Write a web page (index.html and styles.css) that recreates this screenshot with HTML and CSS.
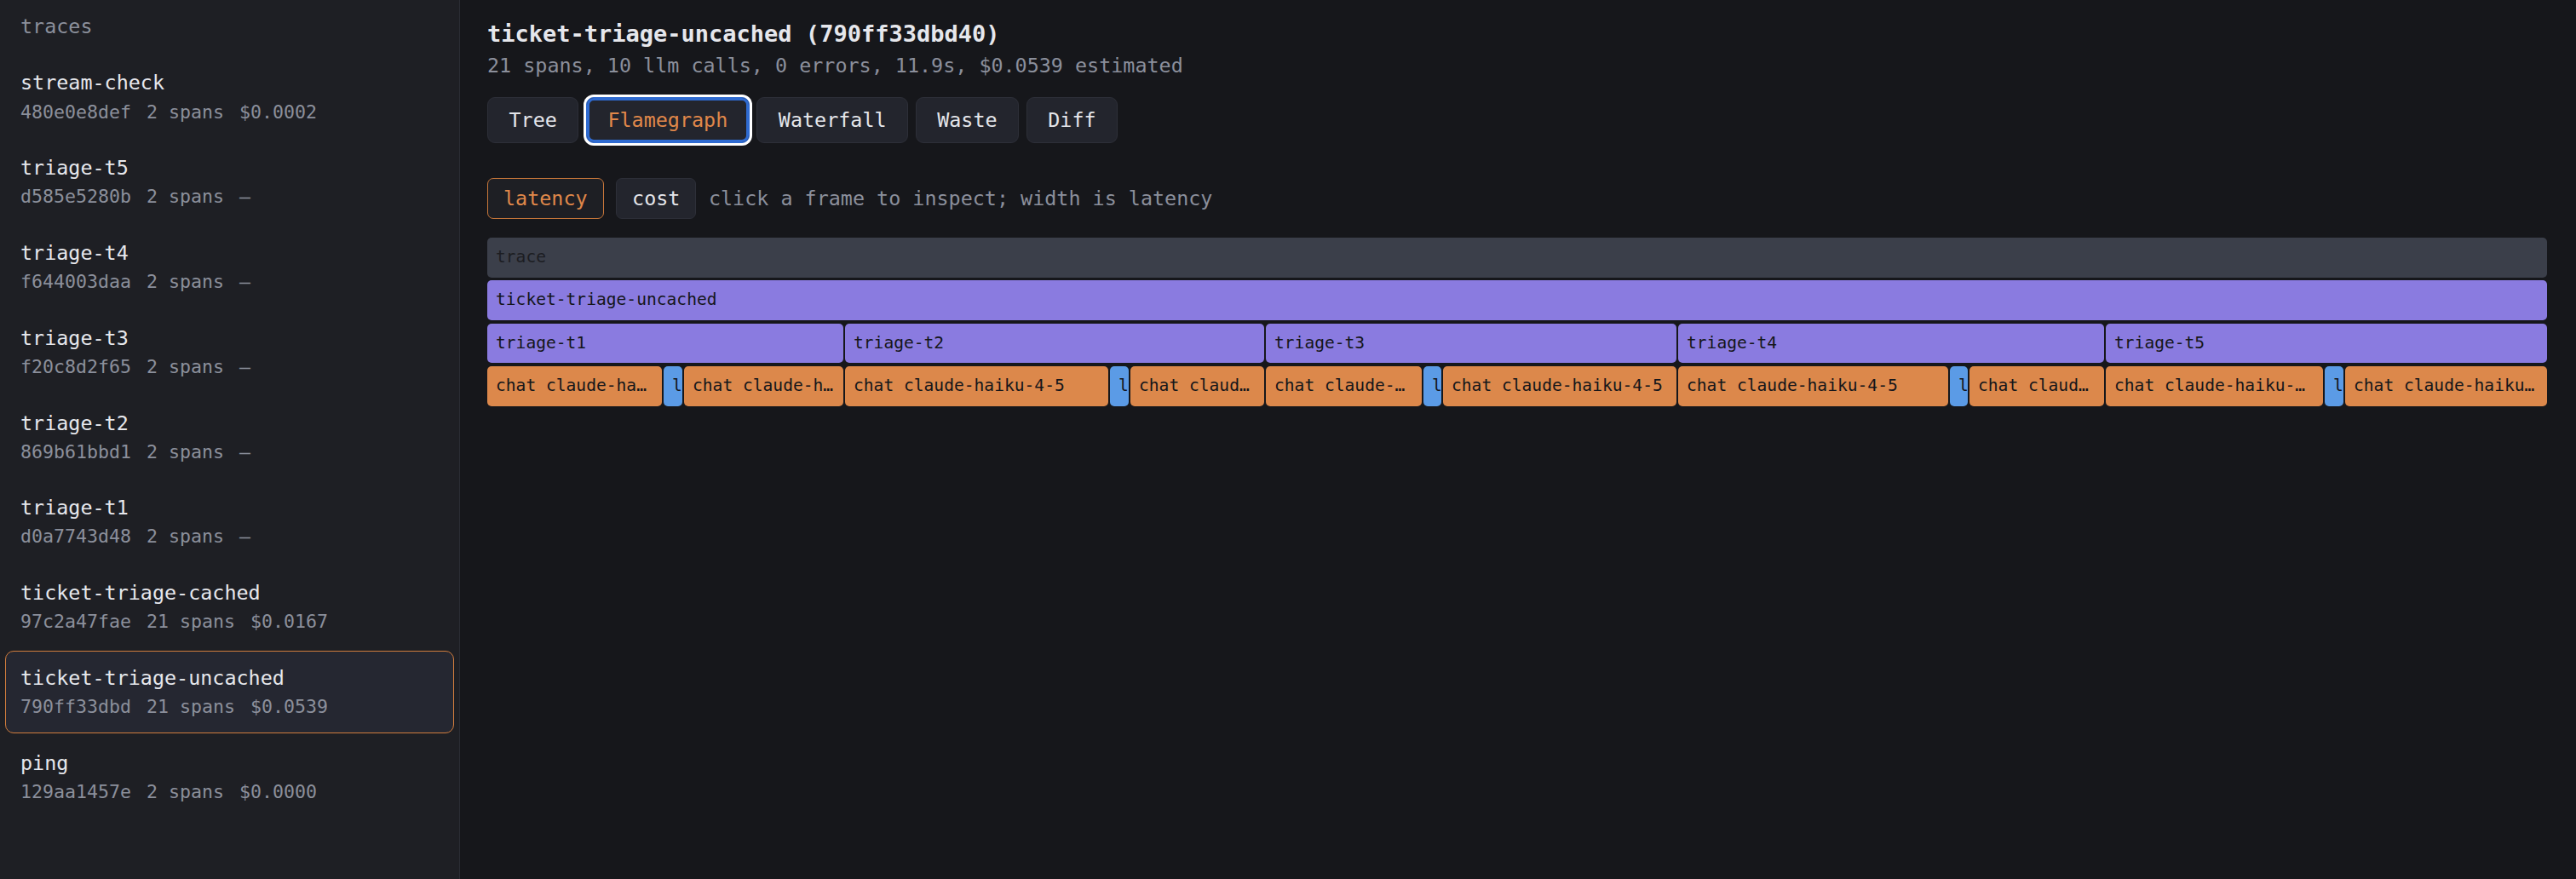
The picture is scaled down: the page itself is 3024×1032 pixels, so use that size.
FILE: index.html
```html
<!DOCTYPE html>
<html lang="en">
<head>
    <meta charset="UTF-8">
    <meta name="viewport" content="width=device-width, initial-scale=1.0">
    <title>traces</title>
    <link rel="stylesheet" href="styles.css">
</head>
<body>
    <aside class="sidebar">
        <div class="sidebar-title">traces</div>

        <div class="trace-item">
            <div class="trace-name">stream-check</div>
            <div class="trace-meta"><span>480e0e8def</span><span>2 spans</span><span>$0.0002</span></div>
        </div>
        <div class="trace-item">
            <div class="trace-name">triage-t5</div>
            <div class="trace-meta"><span>d585e5280b</span><span>2 spans</span><span>–</span></div>
        </div>
        <div class="trace-item">
            <div class="trace-name">triage-t4</div>
            <div class="trace-meta"><span>f644003daa</span><span>2 spans</span><span>–</span></div>
        </div>
        <div class="trace-item">
            <div class="trace-name">triage-t3</div>
            <div class="trace-meta"><span>f20c8d2f65</span><span>2 spans</span><span>–</span></div>
        </div>
        <div class="trace-item">
            <div class="trace-name">triage-t2</div>
            <div class="trace-meta"><span>869b61bbd1</span><span>2 spans</span><span>–</span></div>
        </div>
        <div class="trace-item">
            <div class="trace-name">triage-t1</div>
            <div class="trace-meta"><span>d0a7743d48</span><span>2 spans</span><span>–</span></div>
        </div>
        <div class="trace-item">
            <div class="trace-name">ticket-triage-cached</div>
            <div class="trace-meta"><span>97c2a47fae</span><span>21 spans</span><span>$0.0167</span></div>
        </div>
        <div class="trace-item selected">
            <div class="trace-name">ticket-triage-uncached</div>
            <div class="trace-meta"><span>790ff33dbd</span><span>21 spans</span><span>$0.0539</span></div>
        </div>
        <div class="trace-item">
            <div class="trace-name">ping</div>
            <div class="trace-meta"><span>129aa1457e</span><span>2 spans</span><span>$0.0000</span></div>
        </div>
    </aside>

    <main class="main">
        <h1 class="trace-title">ticket-triage-uncached (790ff33dbd40)</h1>
        <div class="trace-summary">21 spans, 10 llm calls, 0 errors, 11.9s, $0.0539 estimated</div>

        <div class="tabs">
            <button class="tab">Tree</button>
            <button class="tab active">Flamegraph</button>
            <button class="tab">Waterfall</button>
            <button class="tab">Waste</button>
            <button class="tab">Diff</button>
        </div>

        <div class="mode-bar">
            <button class="mode active">latency</button>
            <button class="mode">cost</button>
            <span class="hint">click a frame to inspect; width is latency</span>
        </div>

        <div class="flame">
            <div class="flame-row">
                <div class="frame frame-trace grow">trace</div>
            </div>
            <div class="flame-row">
                <div class="frame frame-agent grow">ticket-triage-uncached</div>
            </div>
            <div class="flame-row">
                <div class="frame frame-agent" style="width:418px">triage-t1</div>
                <div class="frame frame-agent" style="width:492px">triage-t2</div>
                <div class="frame frame-agent" style="width:482px">triage-t3</div>
                <div class="frame frame-agent" style="width:500px">triage-t4</div>
                <div class="frame frame-agent grow">triage-t5</div>
            </div>
            <div class="flame-row">
                <div class="frame frame-llm" style="width:205px">chat claude-haiku-4-5</div>
                <div class="frame frame-tool" style="width:22px">lookup_ticket</div>
                <div class="frame frame-llm" style="width:187px">chat claude-haiku-4-5</div>

                <div class="frame frame-llm" style="width:309px">chat claude-haiku-4-5</div>
                <div class="frame frame-tool" style="width:22px">lookup_ticket</div>
                <div class="frame frame-llm" style="width:157px">chat claude-haiku-4-5</div>

                <div class="frame frame-llm" style="width:183px">chat claude-haiku-4-5</div>
                <div class="frame frame-tool" style="width:21px">lookup_ticket</div>
                <div class="frame frame-llm" style="width:274px">chat claude-haiku-4-5</div>

                <div class="frame frame-llm" style="width:317px">chat claude-haiku-4-5</div>
                <div class="frame frame-tool" style="width:21px">lookup_ticket</div>
                <div class="frame frame-llm" style="width:158px">chat claude-haiku-4-5</div>

                <div class="frame frame-llm" style="width:255px">chat claude-haiku-4-5</div>
                <div class="frame frame-tool" style="width:22px">lookup_ticket</div>
                <div class="frame frame-llm grow">chat claude-haiku-4-5</div>
            </div>
        </div>
    </main>
</body>
</html>
```

FILE: styles.css
```css
* {
    box-sizing: border-box;
}
html, body {
    margin: 0;
    height: 100%;
}
body {
    display: flex;
    background-color: #16171b;
    color: #e4e5ea;
    font-family: "DejaVu Sans Mono", monospace;
    font-size: 23.4px;
    line-height: 1.5;
}

/* sidebar */
.sidebar {
    width: 540px;
    flex-shrink: 0;
    height: 100%;
    padding: 14.4px 6px;
    background-color: #1e1f24;
    border-right: 1px solid #2a2c33;
}
.sidebar-title {
    padding: 0 18px;
    margin-bottom: 16.4px;
    color: #8b8f9b;
}
.trace-item {
    padding: 13.5px 17px;
    margin-bottom: 3.3px;
    border: 1px solid transparent;
    border-radius: 10px;
}
.trace-item.selected {
    background-color: #252731;
    border-color: #d07c3c;
}
.trace-name {
    color: #e6e7ec;
}
.trace-meta {
    display: flex;
    gap: 18px;
    font-size: 21.6px;
    color: #8b8f9b;
}

/* main */
.main {
    flex: 1;
    min-width: 0;
    padding: 19.8px 34px 0 32px;
}
.trace-title {
    margin: 0;
    font-size: 27px;
    font-weight: bold;
    line-height: 1.5;
    color: #e6e7ec;
}
.trace-summary {
    color: #8b8f9b;
}
.tabs {
    display: flex;
    gap: 8.6px;
    margin-top: 18.9px;
}
.tab, .mode {
    font-family: inherit;
    font-size: 23.4px;
    line-height: 1.5;
    color: #e4e5ea;
    background-color: #23252d;
    border: 1px solid #2d2f38;
    cursor: pointer;
}
.tab {
    padding: 8.5px 24.5px;
    border-radius: 9px;
}
.tab.active {
    color: #e0884a;
    border-color: #2f6bd1;
    box-shadow: inset 0 0 0 3px #2f6bd1, 0 0 0 3px #ffffff;
}
.mode-bar {
    display: flex;
    align-items: center;
    gap: 14.5px;
    margin-top: 41px;
}
.mode {
    padding: 5.2px 18px;
    border-radius: 7px;
}
.mode.active {
    color: #e0884a;
    background-color: #1e1f24;
    border-color: #c8773a;
}
.hint {
    color: #8b8f9b;
}

/* flamegraph */
.flame {
    display: flex;
    flex-direction: column;
    gap: 3.8px;
    margin-top: 22.3px;
}
.flame-row {
    display: flex;
    gap: 2px;
}
.frame {
    flex: 0 0 auto;
    height: 46.5px;
    padding: 0 10px;
    border-radius: 5px;
    font-size: 19.6px;
    line-height: 46.5px;
    color: #15161a;
    white-space: nowrap;
    overflow: hidden;
    text-overflow: ellipsis;
}
.frame.grow {
    flex: 1;
}
.frame-trace {
    background-color: #3b3f4a;
    color: #1c1d22;
}
.frame-agent {
    background-color: #8a7be0;
}
.frame-llm {
    background-color: #dc884b;
}
.frame-tool {
    background-color: #5b9be6;
    text-overflow: clip;
}
```
